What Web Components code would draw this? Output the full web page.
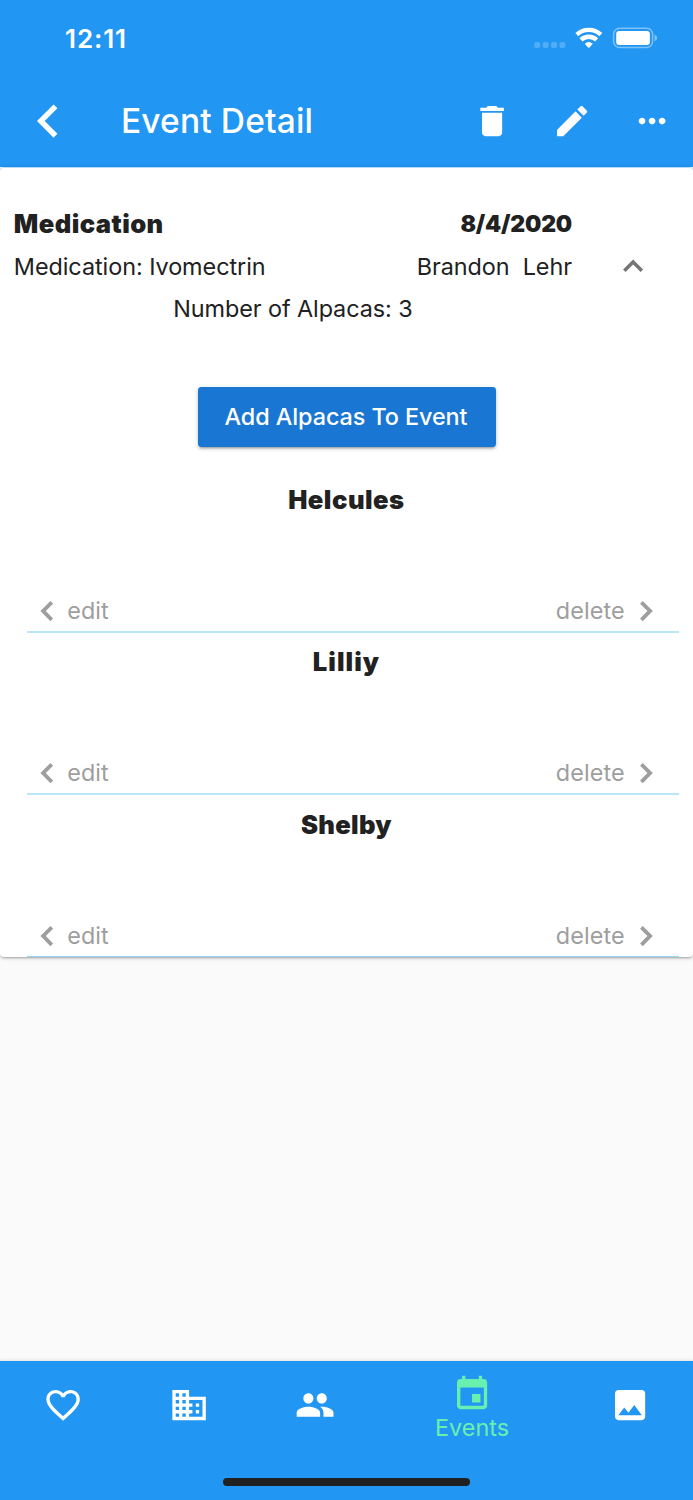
<!DOCTYPE html>
<html lang="en">
<head>
<meta charset="utf-8">
<title>Event Detail</title>
<style>
  body {
    margin: 0;
    background: #fafafa;
    font-family: Inter, "Liberation Sans", sans-serif;
  }
</style>
</head>
<body>
<event-screen></event-screen>

<script>
const ICONS = {
  back: 'M12.2 4.4L9.9 2.1 0 12l9.9 9.9 2.3-2.3L4.6 12z',
  trash: 'M6 19c0 1.1.9 2 2 2h8c1.1 0 2-.9 2-2V7H6v12zM19 4h-3.5l-1-1h-5l-1 1H5v2h14V4z',
  pencil: 'M3 17.25V21h3.75L17.81 9.94l-3.75-3.75L3 17.25zM20.71 7.04c.39-.39.39-1.02 0-1.41l-2.34-2.34c-.39-.39-1.02-.39-1.41 0l-1.83 1.83 3.75 3.75 1.83-1.83z',
  more: 'M6 10c-1.1 0-2 .9-2 2s.9 2 2 2 2-.9 2-2-.9-2-2-2zm12 0c-1.1 0-2 .9-2 2s.9 2 2 2 2-.9 2-2-.9-2-2-2zm-6 0c-1.1 0-2 .9-2 2s.9 2 2 2 2-.9 2-2-.9-2-2-2z',
  up: 'M12 8l-6 6 1.5 1.5L12 11l4.5 4.5L18 14z',
  left: 'M15.6 7.6L14 6l-6 6 6 6 1.6-1.6L11.2 12z',
  right: 'M10 6L8.4 7.6 12.8 12l-4.4 4.4L10 18l6-6z',
  heart: 'M16.5 3c-1.74 0-3.41.81-4.5 2.09C10.91 3.81 9.24 3 7.5 3 4.42 3 2 5.42 2 8.5c0 3.78 3.4 6.86 8.55 11.54L12 21.35l1.45-1.32C18.6 15.36 22 12.28 22 8.5 22 5.42 19.58 3 16.5 3zm-4.4 15.55l-.1.1-.1-.1C7.14 14.24 4 11.39 4 8.5 4 6.5 5.5 5 7.5 5c1.54 0 3.04.99 3.57 2.36h1.87C13.46 5.99 14.96 5 16.5 5c2 0 3.5 1.5 3.5 3.5 0 2.89-3.14 5.74-7.9 10.05z',
  building: 'M12 7V3H2v18h20V7H12zM6 19H4v-2h2v2zm0-4H4v-2h2v2zm0-4H4V9h2v2zm0-4H4V5h2v2zm4 12H8v-2h2v2zm0-4H8v-2h2v2zm0-4H8V9h2v2zm0-4H8V5h2v2zm10 12h-8v-2h2v-2h-2v-2h2v-2h-2V9h8v10zm-2-8h-2v2h2v-2zm0 4h-2v2h2v-2z',
  people: 'M16 11c1.66 0 2.99-1.34 2.99-3S17.66 5 16 5c-1.66 0-3 1.34-3 3s1.34 3 3 3zm-8 0c1.66 0 2.99-1.34 2.99-3S9.66 5 8 5C6.34 5 5 6.34 5 8s1.34 3 3 3zm0 2c-2.33 0-7 1.17-7 3.5V19h14v-2.5c0-2.33-4.67-3.5-7-3.5zm8 0c-.29 0-.62.02-.97.05 1.16.84 1.97 1.97 1.97 3.45V19h6v-2.5c0-2.33-4.67-3.5-7-3.5z',
  event: 'M17 12h-5v5h5v-5zM16 1v2H8V1H6v2H5c-1.11 0-1.99.9-1.99 2L3 19c0 1.1.89 2 2 2h14c1.1 0 2-.9 2-2V5c0-1.1-.9-2-2-2h-1V1h-2zm3 18H5V8h14v11z',
  image: 'M21 19V5c0-1.1-.9-2-2-2H5c-1.1 0-2 .9-2 2v14c0 1.1.9 2 2 2h14c1.1 0 2-.9 2-2zM8.5 13.5l2.5 3.01L14.5 12l4.5 6H5l3.5-4.5z'
};

// <md-icon name="...">, drawn in the current text colour
class MdIcon extends HTMLElement {
  connectedCallback() {
    const name = this.getAttribute('name');
    this.attachShadow({ mode: 'open' }).innerHTML = `
      <style>
        :host { display: block; flex: none; width: 40.2px; height: 40.2px; }
        svg { display: block; width: 100%; height: 100%; fill: currentColor; }
      </style>
      <svg viewBox="0 0 24 24"><path d="${ICONS[name]}"/></svg>
    `;
  }
}
customElements.define('md-icon', MdIcon);

class StatusBar extends HTMLElement {
  connectedCallback() {
    this.attachShadow({ mode: 'open' }).innerHTML = `
      <style>
        :host {
          display: flex;
          justify-content: space-between;
          align-items: center;
          height: 76px;
          padding: 0 36.4px 0 65px;
          box-sizing: border-box;
          color: #fff;
        }
        .time {
          font-size: 26px;
          font-weight: 600;
          letter-spacing: .9px;
          line-height: 76px;
          padding-top: 1px;
        }
        svg { display: block; }
      </style>
      <span class="time"><slot></slot></span>
      <svg width="124" height="22" viewBox="0 0 124 22">
        <g fill="#fff" fill-opacity=".22">
          <rect x="1.2" y="15" width="6" height="6" rx="2"/>
          <rect x="9.6" y="15" width="6" height="6" rx="2"/>
          <rect x="18" y="15" width="6" height="6" rx="2"/>
          <rect x="26.4" y="15" width="6" height="6" rx="2"/>
        </g>
        <g fill="none" stroke="#fff" stroke-width="4.3">
          <path d="M43.8 7.6a17.4 17.4 0 0 1 24 0"/>
          <path d="M48 12.9a11.2 11.2 0 0 1 15.6 0"/>
        </g>
        <path d="M51.8 16.7a5.8 5.8 0 0 1 8 0l-3.3 3.7q-.7.7-1.4 0z" fill="#fff"/>
        <rect x="80.6" y="1.2" width="39" height="19.4" rx="6" fill="none" stroke="#fff" stroke-opacity=".42" stroke-width="1.5"/>
        <rect x="83.2" y="4" width="33.7" height="14" rx="3" fill="#fff"/>
        <path d="M121.6 7.5q2.5 1 2.5 3.4t-2.5 3.4z" fill="#fff" fill-opacity=".45"/>
      </svg>
    `;
  }
}
customElements.define('status-bar', StatusBar);

class AppBar extends HTMLElement {
  connectedCallback() {
    this.attachShadow({ mode: 'open' }).innerHTML = `
      <style>
        :host {
          display: flex;
          align-items: center;
          height: 92px;
          padding: 0 20.4px 2.2px 37px;
          box-sizing: border-box;
          color: #fff;
        }
        .title {
          flex: 1;
          margin-left: 43.8px;
          font-size: 33.5px;
          font-weight: 500;
          letter-spacing: .15px;
          white-space: nowrap;
        }
        .actions { display: flex; gap: 40.1px; }
      </style>
      <md-icon name="back"></md-icon>
      <span class="title"><slot></slot></span>
      <div class="actions">
        <md-icon name="trash"></md-icon>
        <md-icon name="pencil"></md-icon>
        <md-icon name="more"></md-icon>
      </div>
    `;
  }
}
customElements.define('app-bar', AppBar);

class EventSummary extends HTMLElement {
  connectedCallback() {
    this.attachShadow({ mode: 'open' }).innerHTML = `
      <style>
        :host {
          display: flex;
          align-items: center;
          padding: 35.6px 40px 0 13.8px;
          color: #212121;
          font-size: 23.4px;
          letter-spacing: -.05px;
        }
        .info { width: 558.2px; }
        .line {
          display: flex;
          justify-content: space-between;
          height: 42.2px;
          line-height: 44.4px;
          white-space: pre;
        }
        .type { font-size: 25.6px; font-weight: 900; letter-spacing: .44px; line-height: 42px; }
        .date { font-weight: 900; font-size: 23px; letter-spacing: -.2px; line-height: 42px; }
        .count { justify-content: center; letter-spacing: -.08px; }
        md-icon { margin-left: 40.8px; color: #757575; }
      </style>
      <div class="info">
        <div class="line">
          <span class="type">${this.getAttribute('type')}</span>
          <span class="date">${this.getAttribute('date')}</span>
        </div>
        <div class="line">
          <span>${this.getAttribute('detail')}</span>
          <span>${this.getAttribute('owner')}</span>
        </div>
        <div class="line count">${this.getAttribute('count')}</div>
      </div>
      <md-icon name="up"></md-icon>
    `;
  }
}
customElements.define('event-summary', EventSummary);

class RaisedButton extends HTMLElement {
  connectedCallback() {
    this.attachShadow({ mode: 'open' }).innerHTML = `
      <style>
        :host { display: flex; justify-content: center; }
        button {
          width: 298px;
          height: 60px;
          padding: 0 1px 0 0;
          border: 0;
          border-radius: 3.4px;
          background: #1976d2;
          color: #fff;
          font: 500 23.4px Inter, "Liberation Sans", sans-serif;
          letter-spacing: -.08px;
          white-space: nowrap;
          box-shadow: 0 3px 2px -2px rgba(0,0,0,.2), 0 2px 3px rgba(0,0,0,.16), 0 1px 5px rgba(0,0,0,.12);
        }
      </style>
      <button><slot></slot></button>
    `;
  }
}
customElements.define('raised-button', RaisedButton);

class AlpacaRow extends HTMLElement {
  connectedCallback() {
    this.attachShadow({ mode: 'open' }).innerHTML = `
      <style>
        :host {
          display: flex;
          flex-direction: column;
          justify-content: space-between;
          height: 162.4px;
          padding: 9.4px 13.8px 0 27px;
          box-sizing: border-box;
        }
        .name {
          margin-left: -13.4px;
          text-align: center;
          color: #212121;
          font-size: 25.6px;
          font-weight: 900;
          letter-spacing: var(--name-spacing, .5px);
          line-height: 40px;
        }
        .actions {
          display: flex;
          align-items: center;
          justify-content: space-between;
          height: 40.6px;
          padding-right: 13px;
          border-bottom: 2px solid #b8e6fb;
          color: #9e9e9e;
          font-size: 23.4px;
        }
        :host(:last-of-type) .actions {
          height: 39.6px;
          border-bottom: 1px solid #92daf8;
          margin-bottom: 1px;
        }
        .action { display: flex; align-items: center; line-height: 38px; }
        .action span { letter-spacing: .1px; }
        .delete { gap: 1.3px; }
      </style>
      <div class="name"><slot></slot></div>
      <div class="actions">
        <div class="action"><md-icon name="left"></md-icon><span>edit</span></div>
        <div class="action delete"><span>delete</span><md-icon name="right"></md-icon></div>
      </div>
    `;
  }
}
customElements.define('alpaca-row', AlpacaRow);

class TabItem extends HTMLElement {
  connectedCallback() {
    const label = this.getAttribute('label');
    this.attachShadow({ mode: 'open' }).innerHTML = `
      <style>
        :host {
          display: flex;
          flex: 2;
          flex-direction: column;
          align-items: center;
          padding-top: 24.6px;
          color: #fff;
        }
        :host([label]) { flex: 3; padding-top: 12.9px; color: #69f0ae; }
        span { margin-right: 1px; font-size: 23.4px; line-height: 27.6px; }
      </style>
      <md-icon name="${this.getAttribute('icon')}"></md-icon>
      ${label ? `<span>${label}</span>` : ''}
    `;
  }
}
customElements.define('tab-item', TabItem);

class TabBar extends HTMLElement {
  connectedCallback() {
    this.attachShadow({ mode: 'open' }).innerHTML = `
      <style>
        :host {
          display: flex;
          flex-direction: column;
          justify-content: space-between;
          align-items: center;
          height: 139.3px;
          padding-bottom: 13.6px;
          box-sizing: border-box;
          background: #2196f3;
          box-shadow: 0 -1px 3px rgba(0,0,0,.1);
        }
        .tabs { display: flex; width: 100%; }
        .home { width: 247.5px; height: 8.4px; border-radius: 5px; background: #212121; }
      </style>
      <div class="tabs"><slot></slot></div>
      <div class="home"></div>
    `;
  }
}
customElements.define('tab-bar', TabBar);

class EventScreen extends HTMLElement {
  connectedCallback() {
    this.attachShadow({ mode: 'open' }).innerHTML = `
      <style>
        :host { display: flex; flex-direction: column; height: 1500px; overflow: hidden; }
        header { flex: none; height: 167.4px; background: #2196f3; }
        main { flex: 1; }
        .card {
          height: 790.1px;
          border-radius: 4px;
          background: #fff;
          box-shadow: inset 0 1px #b5dcfb, 0 2px 2px -1px rgba(0,0,0,.22), 0 1px 4px rgba(0,0,0,.2);
        }
        raised-button { padding: 57.4px 0 23.6px; }
      </style>
      <header>
        <status-bar>12:11</status-bar>
        <app-bar>Event Detail</app-bar>
      </header>
      <main>
        <div class="card">
          <event-summary type="Medication" date="8/4/2020" detail="Medication: Ivomectrin"
            owner="Brandon  Lehr" count="Number of Alpacas: 3"></event-summary>
          <raised-button>Add Alpacas To Event</raised-button>
          <alpaca-row>Helcules</alpaca-row>
          <alpaca-row style="--name-spacing: 1.05px">Lilliy</alpaca-row>
          <alpaca-row style="--name-spacing: .3px">Shelby</alpaca-row>
        </div>
      </main>
      <tab-bar>
        <tab-item icon="heart"></tab-item>
        <tab-item icon="building"></tab-item>
        <tab-item icon="people"></tab-item>
        <tab-item icon="event" label="Events"></tab-item>
        <tab-item icon="image"></tab-item>
      </tab-bar>
    `;
  }
}
customElements.define('event-screen', EventScreen);
</script>
</body>
</html>
